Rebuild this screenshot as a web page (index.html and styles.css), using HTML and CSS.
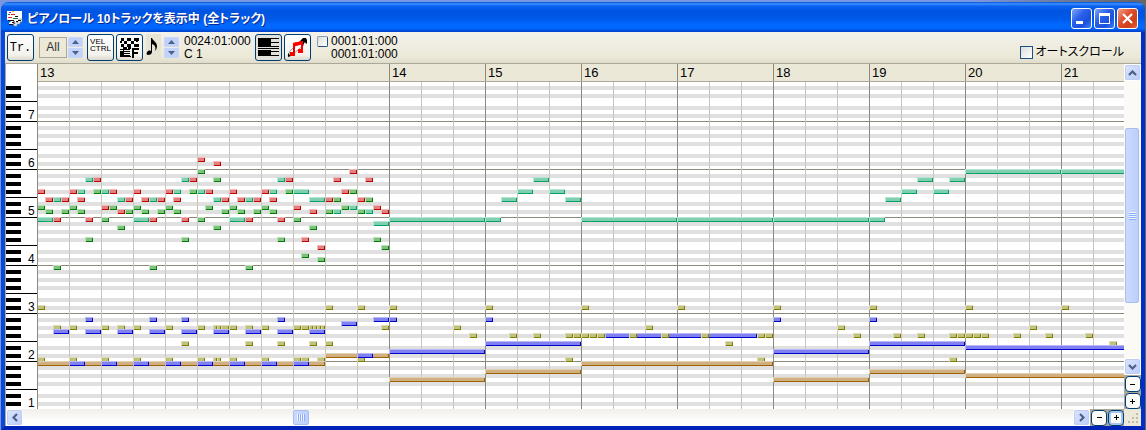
FILE: index.html
```html
<!DOCTYPE html>
<html lang="ja">
<head>
<meta charset="utf-8">
<title>ピアノロール</title>
<link rel="stylesheet" href="styles.css">
</head>
<body>
<main class="window">
  <header class="titlebar">
    <svg class="app-icon" width="17" height="17" viewBox="0 0 17 17" aria-hidden="true">
      <path d="M0 1h15v8l-3 3h-1l-3 2-3 1H2v-2l3-3H0z" fill="#fff"/>
      <path d="M15 9v3h-2v2h-3v2H7v-2l4-2 1-3z" fill="#eee" stroke="#888" stroke-width=".6"/>
      <path d="M2 2.500h2" stroke="#c0c"/><path d="M5 1.500h2" stroke="#cc0"/>
      <path d="M4 4.500h4" stroke="#d22"/><path d="M1 7.500h4" stroke="#d22"/>
      <path d="M6 8.500h5M1 4.500h2" stroke="#173"/>
      <path d="M1 10.500h6M8 6.500h3M9 11.500h2M2 14.500h4M7 11v3M11 10.500h3M5 12.500h2" stroke="#111" fill="none"/>
    </svg>
    <h1 class="title">ピアノロール 10トラックを表示中 (全トラック)</h1>
    <div class="caption-buttons">
      <button class="caption" aria-label="最小化"><svg width="20" height="20" viewBox="0 0 20 20"><path d="M4 12h7v3H4z" fill="#fff"/></svg></button>
      <button class="caption" aria-label="最大化"><svg width="20" height="20" viewBox="0 0 20 20"><path d="M4 4h11v11H4zM5 7v7h9V7z" fill="#fff" fill-rule="evenodd"/></svg></button>
      <button class="caption caption-close" aria-label="閉じる"><svg width="20" height="20" viewBox="0 0 20 20"><path d="M5 5l9 9M14 5l-9 9" stroke="#fff" stroke-width="2.200"/></svg></button>
    </div>
  </header>

  <div class="toolbar">
    <button class="tool tool-tr">Tr.</button>
    <div class="field">
      <output class="all-box">All</output>
      <div class="spin">
        <button class="spin-btn" aria-label="増やす"><svg width="7" height="4" viewBox="0 0 7 4"><path d="M0 4h7L3.500 0z"/></svg></button>
        <button class="spin-btn" aria-label="減らす"><svg width="7" height="4" viewBox="0 0 7 4"><path d="M0 0h7L3.500 4z"/></svg></button>
      </div>
    </div>
    <div class="pair">
      <button class="tool tool-vel">VEL<br>CTRL</button>
      <button class="tool" aria-label="フィルタ"><svg width="20" height="20" viewBox="0 0 20 20" shape-rendering="crispEdges">
        <path d="M1 0h3v3H1zM7 0h4v3H7zM14 0h5v3h-5zM4 3h3v3H4zM11 3h3v3h-3zM1 6h3v3H1zM7 6h4v3H7zM14 6h5v3h-5zM4 9h3v2H4zM0 3h2v2H0zM16 3h2v1h-2zM0 11h10v1H0zM0 13h3v5H0zM4 13h6v1H4zM4 15h6v1H4zM4 17h6v1H4zM0 18h11v1H0zM3 9h1v9H3zM8 9h3v2H8z"/>
        <path d="M12 10h7v2h-5v2h4v2h-4v4h-2z"/></svg></button>
    </div>
    <div class="field field-note">
      <svg class="note-icon" width="15" height="25" viewBox="0 0 15 25" aria-hidden="true"><path d="M5 4h1c1 3 5 4 5 8 0 2-1 4-2 5 1-4 0-6-3-7v8c0 2-2 3-4 3-1 0-2-1-1-3 1-1 2-2 4-1z"/></svg>
      <div class="spin">
        <button class="spin-btn" aria-label="増やす"><svg width="7" height="4" viewBox="0 0 7 4"><path d="M0 4h7L3.500 0z"/></svg></button>
        <button class="spin-btn" aria-label="減らす"><svg width="7" height="4" viewBox="0 0 7 4"><path d="M0 0h7L3.500 4z"/></svg></button>
      </div>
    </div>
    <div class="readout readout-cursor">0024:01:000<br>C 1</div>
    <div class="pair">
      <button class="tool tool-on" aria-label="鍵盤"><svg width="21" height="19" viewBox="0 0 21 19" shape-rendering="crispEdges">
        <path d="M0 0h13v9H0zM0 12h13v6H0zM13 0h8v1h-8zM13 4h8v1h-8zM13 8h8v1h-8zM0 10h21v1H0zM13 13h8v1h-8zM13 17h8v1h-8z"/></svg></button>
      <button class="tool" aria-label="音符編集"><svg width="21" height="20" viewBox="0 0 21 20">
        <path d="M1 18l2-5 10-10 4 4L6 16z" fill="#fff" stroke="#999"/>
        <path d="M1 19v-4l3 3zM13 3l3-3h3l1 2v3l-1 1-1-2-2 3z"/>
        <path d="M6 5l10-2v10h-2V6L8 8v8H6z" fill="#e00"/><path d="M6 5l10-2v3L6 9z" fill="#f00"/>
        <path d="M3 14h5v4H3zM11 11h5v4h-5z" fill="#f00"/></svg></button>
    </div>
    <div class="range">
      <input class="check check-small" type="checkbox" id="range" aria-label="範囲">
      <label class="readout" for="range">0001:01:000<br>0001:01:000</label>
    </div>
    <label class="autoscroll"><input class="check" type="checkbox">オートスクロール</label>
  </div>

  <div class="editor">
    <div class="corner"></div>
    <div class="ruler">
      <span class="measure measure-long">13</span><span class="measure">14</span><span class="measure">15</span><span class="measure">16</span><span class="measure">17</span><span class="measure">18</span><span class="measure">19</span><span class="measure">20</span><span class="measure">21</span>
    </div>
    <svg class="keys" shape-rendering="crispEdges" aria-label="鍵盤">
      <defs><pattern id="octave-keys" y="-8" width="31" height="48" patternUnits="userSpaceOnUse">
        <path d="M0 4h15v4H0zM0 12h15v4H0zM0 20h15v4H0zM0 32h15v4H0zM0 40h15v4H0zM0 27h31v1H0zM0 47h31v1H0z"/>
      </pattern></defs>
      <rect width="31" height="100%" fill="url(#octave-keys)"/>
      <g class="octaves"><text x="22" y="37">7</text><text x="22" y="85">6</text><text x="22" y="133">5</text><text x="22" y="181">4</text><text x="22" y="229">3</text><text x="22" y="277">2</text><text x="22" y="325">1</text></g>
    </svg>
    <svg class="roll" shape-rendering="crispEdges" aria-label="ノート">
      <defs>
        <pattern id="rows" y="-8" width="32" height="48" patternUnits="userSpaceOnUse">
          <path class="band" d="M0 4h32v4H0zM0 12h32v4H0zM0 20h32v4H0zM0 32h32v4H0zM0 40h32v4H0z"/>
          <path class="bar-line" d="M0 47h32v1H0z"/>
        </pattern>
        <pattern id="beats" width="32" height="48" patternUnits="userSpaceOnUse"><path class="beat-line" d="M31 0h1v48h-1z"/></pattern>
        <pattern id="bars" x="352" width="96" height="48" patternUnits="userSpaceOnUse"><path class="bar-line" d="M95 0h1v48h-1z"/></pattern>
      </defs>
      <rect width="100%" height="100%" fill="url(#rows)"/>
      <rect width="100%" height="100%" fill="url(#beats)"/>
      <rect x="351" width="100%" height="100%" fill="url(#bars)"/>
      <g id="notes"></g>
    </svg>
    <div class="side">
      <button class="arrow" aria-label="上へ"><svg width="9" height="6" viewBox="0 0 9 6"><path d="M1 5l3.500-3.500L8 5"/></svg></button>
      <div class="track track-v"><i class="space-before"></i><div class="thumb"><b class="grip-v"></b></div><i class="space-after"></i></div>
      <button class="arrow" aria-label="下へ"><svg width="9" height="6" viewBox="0 0 9 6"><path d="M1 1l3.500 3.500L8 1"/></svg></button>
      <div class="zoom zoom-v">
        <button class="zoom-btn" aria-label="縦縮小"><svg width="7" height="7" viewBox="0 0 7 7"><path d="M1 3h5v1H1z"/></svg></button>
        <button class="zoom-btn" aria-label="縦拡大"><svg width="7" height="7" viewBox="0 0 7 7"><path d="M1 3h5v1H1zM3 1h1v5H3z"/></svg></button>
      </div>
    </div>
    <div class="bottom">
      <button class="arrow" aria-label="左へ"><svg width="6" height="9" viewBox="0 0 6 9"><path d="M5 1L1.500 4.500 5 8"/></svg></button>
      <div class="track track-h"><i class="space-left"></i><div class="thumb"><b class="grip-h"></b></div><i class="space-right"></i></div>
      <button class="arrow" aria-label="右へ"><svg width="6" height="9" viewBox="0 0 6 9"><path d="M1 1l3.500 3.500L1 8"/></svg></button>
      <div class="zoom">
        <button class="zoom-btn" aria-label="横縮小"><svg width="7" height="7" viewBox="0 0 7 7"><path d="M1 3h5v1H1z"/></svg></button>
        <button class="zoom-btn zoom-focus" aria-label="横拡大"><svg width="7" height="7" viewBox="0 0 7 7"><path d="M1 3h5v1H1zM3 1h1v5H3z"/></svg></button>
      </div>
      <svg class="size-grip" width="17" height="17" viewBox="0 0 17 17" aria-hidden="true"><path d="M12 4h2v2h-2zM8 8h2v2H8zM12 8h2v2h-2zM4 12h2v2H4zM8 12h2v2H8zM12 12h2v2h-2z"/></svg>
    </div>
  </div>
</main>
<script src="notes.js"></script>
</body>
</html>
```
FILE: styles.css
```css
* { box-sizing: border-box; }
body {
  margin: 0;
  padding: 2px 1px 0;
  background: linear-gradient(90deg, #7b96e0 0 85%, #666 99%);
  font-family: "Liberation Sans", "Noto Sans CJK JP", sans-serif;
  color: #000;
}
button { font: inherit; color: inherit; padding: 0; margin: 0; }
.window {
  display: flex;
  flex-direction: column;
  min-height: calc(100vh - 2px);
  border: solid #0050e6;
  border-width: 0 4px 4px;
  border-radius: 8px 8px 0 0;
  background: #ece9d8;
  border-left-color: #0848dc;
  border-right-color: #0030cc;
  border-bottom-color: #0024b8;
}
.titlebar {
  display: flex;
  align-items: center;
  gap: 3px;
  height: 30px;
  margin: 0 -4px;
  padding: 3px 7px 0 6px;
  border-radius: 8px 8px 0 0;
  background: linear-gradient(#0050d8 0, #3c90ff 6%, #0a60f0 14%, #0054e0 30%, #0058e8 55%, #0068ff 75%, #0066fc 88%, #0040c8 100%);
}
.app-icon { flex: none; }
.title {
  flex: 1;
  margin: 0;
  color: #fff;
  font-size: 12px;
  line-height: 16px;
  font-weight: 700;
  font-feature-settings: "palt";
  text-shadow: 1px 1px 0 #0a2a90;
  white-space: nowrap;
  overflow: hidden;
}
.caption-buttons { display: flex; gap: 2px; }
.caption {
  width: 21px;
  height: 21px;
  border: 1px solid #fff;
  border-radius: 3px;
  background: linear-gradient(135deg, #7ea4f8, #2a60e8 40%, #1a50dc 70%, #3c80f8);
}
.caption svg { display: block; }
.caption-close { background: linear-gradient(135deg, #f0a088, #e05030 40%, #d04018 70%, #e06030); }

.toolbar {
  display: flex;
  align-items: flex-start;
  height: 32px;
  padding: 2px 17px 0 2px;
  border-bottom: 1px solid #aca899;
  background: linear-gradient(#f3f2ec, #ece9d8 80%, #e0dccb);
}
.tool {
  display: flex;
  align-items: center;
  justify-content: center;
  width: 27px;
  height: 27px;
  border: 1px solid #003c74;
  border-radius: 3px;
  background: linear-gradient(#fff, #f3f2ec 80%, #dcd8cc);
}
.tool-on { background: #e3e2da; }
.tool-tr { font: 12px/14px "Liberation Mono", monospace; }
.tool-vel { font: 8px/7px "Liberation Sans", sans-serif; text-align: left; padding-bottom: 6px; }
.pair { display: flex; gap: 2px; }
.field { display: flex; gap: 1px; padding: 3px 4px 0 5px; }
.field-note { padding: 0 5px 0 3px; gap: 3px; }
.field-note .spin { margin-top: 3px; }
.all-box {
  width: 28px;
  height: 21px;
  border: 1px solid #aca899;
  background: #ece9d8;
  font-size: 12px;
  line-height: 19px;
  text-align: center;
  color: #333;
}
.note-icon { background: #e8e4d4; }
.spin { display: flex; flex-direction: column; gap: 1px; }
.spin-btn {
  display: flex;
  align-items: center;
  justify-content: center;
  width: 15px;
  height: 10px;
  border: 1px solid #c8d6fb;
  border-radius: 1px;
  background: #c1d2fa;
}
.spin-btn svg { fill: #4d6185; }
.readout { padding-top: 1px; font-size: 12px; line-height: 13px; white-space: nowrap; }
.readout-cursor { width: 71px; }
.range { display: flex; gap: 3px; margin-left: 6px; }
.check {
  appearance: none;
  flex: none;
  width: 13px;
  height: 13px;
  margin: 0;
  border: 1px solid #1c5180;
  background: linear-gradient(135deg, #dcdcd7, #fff);
}
.check-small { width: 11px; height: 11px; border-color: #88a0b4 #1c5180 #1c5180 #88a0b4; border-radius: 2px; margin-top: 2px; }
.autoscroll {
  display: flex;
  align-items: center;
  gap: 3px;
  margin: 10px 0 0 auto;
  font-size: 12px;
  line-height: 16px;
  font-feature-settings: "palt";
  white-space: nowrap;
}

.editor {
  flex: 1;
  display: grid;
  grid-template-columns: 32px minmax(0, 1fr) 17px;
  grid-template-rows: 18px minmax(327px, 1fr) 17px;
  border-left: 1px solid #aca899;
}
.corner { background: #fff; border-right: 1px solid #8c8a7c; }
.ruler { display: flex; overflow: hidden; border-bottom: 1px solid #aca899; background: #ebe8d8; }
.measure {
  flex: none;
  width: 96px;
  padding-left: 2px;
  border-right: 1px solid #8c8a7c;
  font-size: 13px;
  line-height: 18px;
}
.measure-long { width: 352px; }
.keys { width: 32px; height: 100%; overflow: visible; background: #fff; border-right: 1px solid #8c8a7c; }
.octaves { font-size: 12px; }
.roll { width: 100%; height: 100%; background: #fff; }
.band { fill: #e0e0e0; }
.bar-line { fill: #8c8a7c; }
.beat-line { fill: #c8c6b8; }
.red { --light: #f4b8b8; --face: #e08080; --dark: #c00000; }
.green { --light: #b8e0b8; --face: #80c080; --dark: #008000; }
.teal { --light: #b4e8d4; --face: #80d0b0; --dark: #00a068; }
.blue { --light: #b8b8f8; --face: #8080f0; --dark: #0000d0; }
.indigo { --light: #b8b8f0; --face: #8080e0; --dark: #0000c0; }
.olive { --light: #dcdcb0; --face: #c0c080; --dark: #808000; }
.tan { --light: #e4d0b4; --face: #d0b080; --dark: #a06000; }
.note-light { fill: var(--light); }
.note-dark { fill: var(--dark); }
.note-face { fill: var(--face); }

.side { grid-row: 1 / 3; grid-column: 3; display: flex; flex-direction: column; background: #fbfaf7; }
.bottom { grid-column: 1 / 4; display: flex; background: linear-gradient(#f0efe8, #fefefc 70%); }
.arrow {
  flex: none;
  display: flex;
  align-items: center;
  justify-content: center;
  width: 17px;
  height: 17px;
  border: 1px solid #fff;
  outline: 1px solid #c0cdf0;
  outline-offset: -2px;
  border-radius: 3px;
  background: linear-gradient(135deg, #dbe5ff, #bbccf8);
}
.arrow path { fill: none; stroke: #4d6185; stroke-width: 2.2; }
.track { flex: 1; display: flex; }
.track-v { flex-direction: column; }
.space-before { flex: 47; }
.space-after { flex: 55; }
.space-left { flex: 270; }
.space-right { flex: 764; }
.thumb {
  display: flex;
  align-items: center;
  justify-content: center;
  border: 1px solid #a8bdf0;
  border-radius: 2px;
  background: linear-gradient(90deg, #cbdaff, #bccffb);
}
.track-v .thumb { flex: 174; margin: 0 2px 0 1px; }
.track-h .thumb { width: 16px; margin: 1px 0; }
.grip-v { width: 7px; height: 8px; background: repeating-linear-gradient(#eef4ff 0 1px, #8cb0f8 1px 2px); }
.grip-h { width: 8px; height: 7px; background: repeating-linear-gradient(90deg, #eef4ff 0 1px, #8cb0f8 1px 2px); }
.zoom { display: flex; align-items: center; gap: 1px; padding-left: 1px; background: #aca899; }
.zoom-v { flex-direction: column; padding: 1px 0 0; }
.zoom-btn {
  display: flex;
  align-items: center;
  justify-content: center;
  width: 16px;
  height: 16px;
  border: 1px solid #003c74;
  border-radius: 4px;
  background: #fbfbf8;
}
.zoom-focus { box-shadow: inset 0 0 0 2px #a8c4f0; }
.size-grip { background: #ece9d8; }
.size-grip path { fill: #c0bcac; }
```
FILE: notes.js
```js
// Each row: colour, top edge, then start or [start, length] in steps of 8px.
const STEP = 8;
const rows = [
  ["red", 75, 20], ["red", 79, 22],
  ["red", 87, 39], ["green", 87, 20],
  ["teal", 95, 6, 18, 30, [62, 2], [110, 2], [114, 2]],
  ["red", 95, 7, 19, 31, 37, 41], ["green", 95, 22],
  ["teal", 107, 5, 8, 17, 20, 29, [32, 2], [60, 2], [64, 2], [108, 2], [112, 2]],
  ["red", 107, 0, 4, 9, 12, 16, 21, 24, 28, 38], ["green", 107, 7, 19, 31, 39],
  ["teal", 115, 2, 10, 14, 22, 26, [34, 2], [58, 2], [66, 2], [106, 2]],
  ["red", 115, 1, 3, 5, 11, 13, 15, 17, 23, 25, 27, 29, 36, 40], ["green", 115, 37, 41],
  ["green", 123, 0, 4, 9, 12, 16, 21, 24, 28, 38], ["red", 123, 8, 32, 42], ["teal", 123, 39],
  ["green", 127, 1, 3, 5, 11, 13, 15, 17, 23, 25, 27, 29, 36, 40],
  ["red", 127, 10, 34, 43], ["teal", 127, 37, 41],
  ["teal", 135, [0, 2], [12, 2], [24, 2], [44, 12], [56, 2], [68, 12], [80, 12], [92, 12], [104, 2]],
  ["red", 135, 2, 6, 14, 18, 26, 30], ["green", 135, 8, 20, 32],
  ["teal", 139, [42, 2]], ["green", 143, 10, 22, 34],
  ["green", 155, 6, 18, 30, 42], ["red", 155, 33],
  ["red", 163, 35], ["green", 163, 43], ["green", 171, 33], ["green", 175, 35],
  ["green", 183, 2, 14, 26],
  ["teal", 87, [116, 12], [128, 12]],
  ["blue", 251, [71, 19]],
  ["olive", 223, 0, 36, 40, 44, 56, 68, 80, 92, 104, 116, 128],
  ["olive", 243, 2, 4, 8, 10, 12, 16, 20, [22, 0.5], [22.5, 0.5], 23, 24, 26, 28, 32, 33,
    [34, 0.5], [34.5, 0.5], [35, 0.5], [35.5, 0.5], 43, 52, 76, 100, 124],
  ["olive", 251, 54, 59, 62, 66, 67, 68, 69, 70, 74, 78, 83, 90, 91, 102, 107, 110,
    114, 115, 116, 117, 118, 122, 126, 131],
  ["olive", 259, 18, 26, 30, 34, 36, 86, 134],
  ["olive", 275, 0, 4, 8, 12, 16, 20, [22, 0.5], [22.5, 0.5], 24, 28, 32, 33, 35, 40, 66, 90, 114],
  ["tan", 279, [0, 36], [68, 24]], ["tan", 271, [36, 8]],
  ["tan", 295, [44, 12], [92, 12]], ["tan", 287, [56, 12], [104, 12]], ["tan", 291, [116, 24]],
  ["indigo", 235, 6, 14, 18, 30, 44, 56, 92, 104], ["blue", 235, [42, 2]], ["blue", 239, [38, 2]],
  ["blue", 247, [2, 2], [6, 2], [10, 2], [14, 2], [18, 2], [22, 2], [26, 2], [30, 2], [34, 2]],
  ["blue", 279, [4, 2], [8, 2], [12, 2], [16, 2], [20, 2], [24, 2], [28, 2], [32, 2]],
  ["blue", 271, [40, 2]], ["blue", 267, [44, 12], [92, 12]],
  ["blue", 259, [56, 12], [104, 12]], ["blue", 263, [116, 24]]
];

const layer = document.getElementById("notes");

function box(parent, name, x, y, width, height) {
  const rect = document.createElementNS("http://www.w3.org/2000/svg", "rect");
  rect.setAttribute("class", name);
  rect.setAttribute("x", x);
  rect.setAttribute("y", y);
  rect.setAttribute("width", width);
  rect.setAttribute("height", height);
  parent.appendChild(rect);
}

for (const [colour, top, ...starts] of rows) {
  const group = document.createElementNS("http://www.w3.org/2000/svg", "g");
  group.setAttribute("class", colour);
  for (const item of starts) {
    const [start, length] = Array.isArray(item) ? item : [item, 1];
    const x = start * STEP - 1;
    const w = length * STEP;
    box(group, "note-light", x, top, w, 5);
    box(group, "note-dark", x + 1, top + 1, w - 1, 4);
    box(group, "note-face", x + 1, top + 1, w - 2, 3);
  }
  layer.appendChild(group);
}
```
